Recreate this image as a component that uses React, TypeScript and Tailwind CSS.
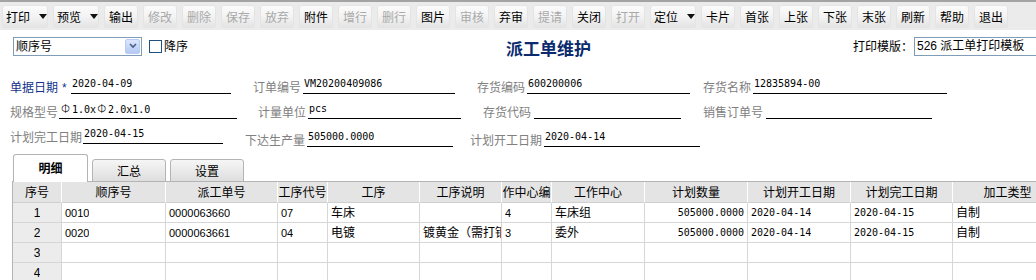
import React from 'react';

type Btn = { t: string; off?: boolean; dd?: boolean };

const buttons: Btn[] = [
  { t: '打印', dd: true },
  { t: '预览', dd: true },
  { t: '输出' },
  { t: '修改', off: true },
  { t: '删除', off: true },
  { t: '保存', off: true },
  { t: '放弃', off: true },
  { t: '附件' },
  { t: '增行', off: true },
  { t: '删行', off: true },
  { t: '图片' },
  { t: '审核', off: true },
  { t: '弃审' },
  { t: '提请', off: true },
  { t: '关闭' },
  { t: '打开', off: true },
  { t: '定位', dd: true },
  { t: '卡片' },
  { t: '首张' },
  { t: '上张' },
  { t: '下张' },
  { t: '末张' },
  { t: '刷新' },
  { t: '帮助' },
  { t: '退出' },
];

const cols = [
  { h: '序号', w: 'w-[49px]', a: 'justify-center bg-[#ececec]' },
  { h: '顺序号', w: 'w-[104px]', a: 'pl-[3px] font-sans11' },
  { h: '派工单号', w: 'w-[112px]', a: 'pl-[3px] font-sans11' },
  { h: '工序代号', w: 'w-[50px]', a: 'pl-[3px] font-sans11' },
  { h: '工序', w: 'w-[92px]', a: 'pl-[3px]' },
  { h: '工序说明', w: 'w-[82px]', a: 'pl-[3px]' },
  { h: '作中心编', w: 'w-[50px]', a: 'pl-[3px] font-sans11' },
  { h: '工作中心', w: 'w-[93px]', a: 'pl-[3px]' },
  { h: '计划数量', w: 'w-[103px]', a: 'justify-end pr-[3px] font-mono10' },
  { h: '计划开工日期', w: 'w-[103px]', a: 'pl-[3px] font-mono10' },
  { h: '计划完工日期', w: 'w-[102px]', a: 'pl-[3px] font-mono10' },
  { h: '加工类型', w: 'w-[110px]', a: 'pl-[3px]' },
];

const rows: string[][] = [
  ['1', '0010', '0000063660', '07', '车床', '', '4', '车床组', '505000.0000', '2020-04-14', '2020-04-15', '自制'],
  ['2', '0020', '0000063661', '04', '电镀', '镀黄金（需打铜线）', '3', '委外', '505000.0000', '2020-04-14', '2020-04-15', '自制'],
  ['3', '', '', '', '', '', '', '', '', '', '', ''],
  ['4', '', '', '', '', '', '', '', '', '', '', ''],
];

const cellFont = (a: string) => {
  if (a.includes('font-mono10')) return "font-['DejaVu_Sans_Mono',monospace] text-[10px]";
  if (a.includes('font-sans11')) return "font-['Liberation_Sans','Noto_Sans_CJK_SC',sans-serif] text-[11px]";
  return '';
};

const Arrow = () => (
  <svg width="8" height="5" viewBox="0 0 8 5" className="shrink-0">
    <path d="M0 0 L8 0 L4 5 Z" fill="#111" />
  </svg>
);

const Label = ({ text, w }: { text: string; w: string }) => (
  <div className={`${w} shrink-0 h-[14px] leading-[14px] text-[#808080] whitespace-nowrap`}>{text}</div>
);

const Value = ({ v, w }: { v?: React.ReactNode; w: string }) => (
  <div
    className={`${w} shrink-0 h-[18px] border-b border-black pl-[1px] leading-[16px] font-['DejaVu_Sans_Mono',monospace] text-[10px] text-black whitespace-nowrap overflow-hidden`}
  >
    {v}
  </div>
);

const Phi = () => (
  <span className="inline-block w-[12px] text-center font-['DejaVu_Sans',sans-serif] text-[12px] font-light">Φ</span>
);

export default function App() {
  return (
    <div className="w-[1036px] h-[280px] overflow-hidden bg-white font-['Liberation_Sans','Noto_Sans_CJK_SC',sans-serif] text-[12px] text-black">
      {/* toolbar */}
      <div className="h-[30px] border-t-2 border-[#a3a3a3] bg-[#ebebeb] flex items-start pt-[3px] pl-[2px] gap-[5px]">
        {buttons.map((b) => (
          <div
            key={b.t}
            className={`h-[23px] shrink-0 rounded-[3px] bg-linear-to-b from-[#fcfcfc] via-[#f3f3f3] to-[#e2e2e2] shadow-[inset_0_0_0_1px_#e4e4e4] flex items-center font-['Noto_Sans_CJK_SC',sans-serif] leading-[14px] ${
              b.dd ? 'w-[46px] pl-[4px] gap-[9px]' : 'w-[34px] justify-center'
            } ${b.off ? 'text-[#a9a9a9]' : 'text-black'}`}
          >
            <span>{b.t}</span>
            {b.dd && <Arrow />}
          </div>
        ))}
      </div>

      {/* heading row */}
      <div className="h-[32px] flex items-center">
        <div className="w-[506px] shrink-0 flex items-center pl-[13px]">
          <div className="w-[129px] h-[19px] border border-[#7f9db9] flex items-center justify-between pl-[2px] pr-[1px]">
            <span className="font-['Noto_Sans_CJK_SC',sans-serif] leading-[14px]">顺序号</span>
            <div className="w-[15px] h-[15px] rounded-[2px] bg-linear-to-b from-[#dce7fd] to-[#b4c8f4] border border-[#b8cbf2] flex items-center justify-center">
              <svg width="8" height="6" viewBox="0 0 8 6">
                <path d="M1 1 L4 4 L7 1" fill="none" stroke="#4a5f86" strokeWidth="1.6" />
              </svg>
            </div>
          </div>
          <div className="ml-[7px] w-[13px] h-[13px] border border-[#1c5180] bg-white" />
          <span className="ml-[2px] font-['Noto_Sans_CJK_SC',sans-serif] leading-[14px]">降序</span>
        </div>
        <div className="w-[347px] shrink-0 pt-[3px] font-['Noto_Sans_CJK_SC',sans-serif] text-[17px] font-bold text-[#0b2b6e] leading-[20px]">
          派工单维护
        </div>
        <div className="w-[61px] shrink-0 font-['Noto_Sans_CJK_SC',sans-serif] leading-[14px]">打印模版：</div>
        <div className="w-[140px] shrink-0 h-[19px] border border-[#7f9db9] pl-[2px] leading-[17px] whitespace-nowrap">
          526 派工单打印模板
        </div>
      </div>

      {/* form */}
      <div className="font-['Noto_Sans_CJK_SC',sans-serif]">
        <div className="h-[32px] flex items-end pl-[10px]">
          <div className="w-[243px] shrink-0 flex items-end">
            <div className="w-[61px] shrink-0 h-[14px] leading-[14px] whitespace-nowrap">
              <span className="text-[#13308c]">单据日期</span>
              <span className="text-[#13308c] ml-[4px] font-['Liberation_Sans',sans-serif]">*</span>
            </div>
            <Value w="w-[160px]" v="2020-04-09" />
          </div>
          <div className="w-[224px] shrink-0 flex items-end">
            <Label w="w-[50px]" text="订单编号" />
            <Value w="w-[152px]" v="VM20200409086" />
          </div>
          <div className="w-[226px] shrink-0 flex items-end">
            <Label w="w-[50px]" text="存货编码" />
            <Value w="w-[163px]" v="600200006" />
          </div>
          <div className="shrink-0 flex items-end">
            <Label w="w-[50px]" text="存货名称" />
            <Value w="w-[194px]" v="12835894-00" />
          </div>
        </div>

        <div className="h-[25px] flex items-end pl-[10px]">
          <div className="w-[248px] shrink-0 flex items-end">
            <Label w="w-[49px]" text="规格型号" />
            <Value
              w="w-[178px]"
              v={
                <>
                  <Phi />1.0x<Phi />2.0x1.0
                </>
              }
            />
          </div>
          <div className="w-[225px] shrink-0 flex items-end">
            <Label w="w-[50px]" text="计量单位" />
            <Value w="w-[153px]" v="pcs" />
          </div>
          <div className="w-[220px] shrink-0 flex items-end">
            <Label w="w-[51px]" text="存货代码" />
            <Value w="w-[147px]" />
          </div>
          <div className="shrink-0 flex items-end">
            <Label w="w-[63px]" text="销售订单号" />
            <Value w="w-[166px]" />
          </div>
        </div>

        <div className="h-[28px] flex items-end pl-[10px]">
          <div className="w-[235px] shrink-0 flex items-end mb-[3px]">
            <Label w="w-[73px]" text="计划完工日期" />
            <Value w="w-[140px]" v="2020-04-15" />
          </div>
          <div className="w-[225px] shrink-0 flex items-end">
            <Label w="w-[62px]" text="下达生产量" />
            <Value w="w-[146px]" v="505000.0000" />
          </div>
          <div className="shrink-0 flex items-end">
            <Label w="w-[74px]" text="计划开工日期" />
            <Value w="w-[156px]" v="2020-04-14" />
          </div>
        </div>
      </div>

      {/* tabs + grid */}
      <div className="mt-[7px] pl-[12px]">
        <div className="relative z-10 -mb-px flex items-end gap-[4px] pl-[1px] font-['Noto_Sans_CJK_SC',sans-serif]">
          <div className="w-[75px] h-[28px] border border-b-0 border-[#b4b4b4] rounded-t-[3px] bg-white flex items-center justify-center font-bold pb-[1px] leading-[14px]">
            明细
          </div>
          <div className="w-[74px] h-[23px] border border-[#b4b4b4] rounded-t-[3px] bg-linear-to-b from-[#f6f6f6] to-[#dedede] flex items-center justify-center leading-[14px]">
            汇总
          </div>
          <div className="w-[74px] h-[23px] border border-[#b4b4b4] rounded-t-[3px] bg-linear-to-b from-[#f6f6f6] to-[#dedede] flex items-center justify-center leading-[14px]">
            设置
          </div>
        </div>
        <div className="border-l border-t border-[#b4b4b4]">
          <div className="flex">
            {cols.map((c) => (
              <div
                key={c.h}
                className={`${c.w} shrink-0 h-[21px] bg-[#e4e4e4] border-r border-b border-r-white border-b-[#cfcfcf] flex items-center justify-center overflow-hidden whitespace-nowrap font-['Noto_Sans_CJK_SC',sans-serif] leading-[14px]`}
              >
                {c.h}
              </div>
            ))}
          </div>
          {rows.map((r) => (
            <div key={r[0]} className="flex">
              {r.map((v, i) => (
                <div
                  key={i}
                  className={`${cols[i].w} ${cols[i].a} ${cellFont(cols[i].a)} shrink-0 h-[20px] border-r border-b border-[#d6d6d6] flex items-center overflow-hidden whitespace-nowrap leading-[14px]`}
                >
                  <span className="block min-w-0 overflow-hidden">{v}</span>
                </div>
              ))}
            </div>
          ))}
        </div>
      </div>
    </div>
  );
}
